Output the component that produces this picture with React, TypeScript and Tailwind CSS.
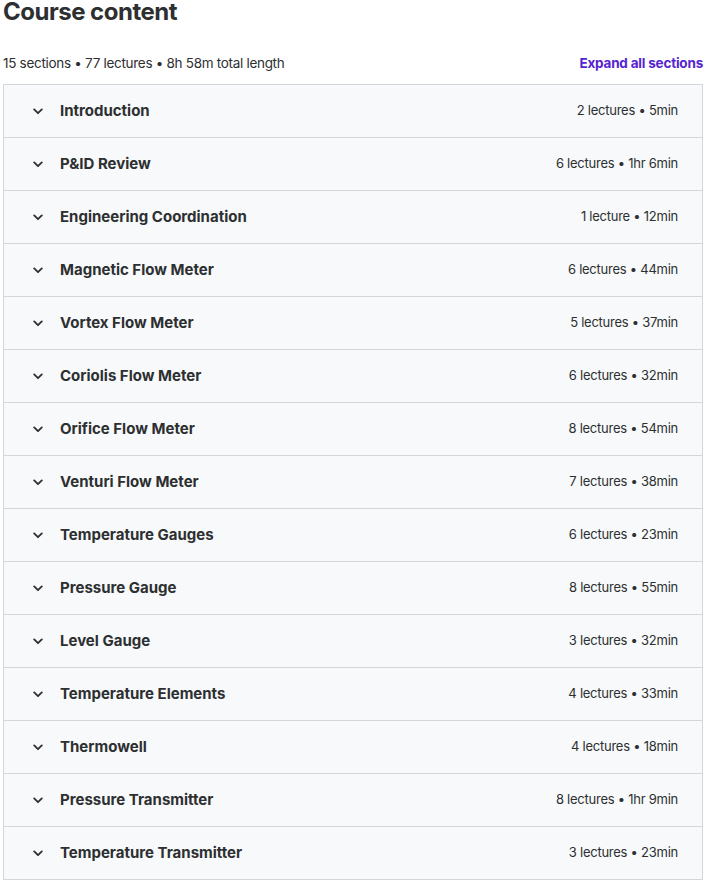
const SECTIONS = [
  { title: "Introduction", meta: "2 lectures • 5min" },
  { title: "P&ID Review", meta: "6 lectures • 1hr 6min" },
  { title: "Engineering Coordination", meta: "1 lecture • 12min" },
  { title: "Magnetic Flow Meter", meta: "6 lectures • 44min" },
  { title: "Vortex Flow Meter", meta: "5 lectures • 37min" },
  { title: "Coriolis Flow Meter", meta: "6 lectures • 32min" },
  { title: "Orifice Flow Meter", meta: "8 lectures • 54min" },
  { title: "Venturi Flow Meter", meta: "7 lectures • 38min" },
  { title: "Temperature Gauges", meta: "6 lectures • 23min" },
  { title: "Pressure Gauge", meta: "8 lectures • 55min" },
  { title: "Level Gauge", meta: "3 lectures • 32min" },
  { title: "Temperature Elements", meta: "4 lectures • 33min" },
  { title: "Thermowell", meta: "4 lectures • 18min" },
  { title: "Pressure Transmitter", meta: "8 lectures • 1hr 9min" },
  { title: "Temperature Transmitter", meta: "3 lectures • 23min" },
];

function Chevron() {
  return (
    <svg width="10" height="7" viewBox="0 0 10 7" fill="none" className="shrink-0 text-[#2d2f31]">
      <path d="M1.2 1.4L5 5.2L8.8 1.4" stroke="currentColor" strokeWidth="1.8" strokeLinecap="round" strokeLinejoin="round" />
    </svg>
  );
}

export default function App() {
  return (
    <div className="w-[705px] pl-[3px] pr-[2px] text-[#2d2f31] font-['Inter','Liberation_Sans',sans-serif] bg-white">
      {/* Heading */}
      <h2 className="text-[24px] font-bold leading-[24px] tracking-[-0.5px]">Course content</h2>

      {/* Summary row */}
      <div className="flex items-center justify-between mt-[25px] h-[28px]">
        <span className="text-[13.5px] tracking-[-0.3px] text-[#2d2f31]">15 sections • 77 lectures • 8h 58m total length</span>
        <button className="text-[13.5px] font-bold tracking-[-0.2px] text-[#5624d0]">Expand all sections</button>
      </div>

      {/* Sections */}
      <div className="mt-[7px] border border-[#d1d7dc] bg-[#f7f9fa]">
        {SECTIONS.map((s, i) => (
          <div
            key={s.title}
            className={`flex items-center pl-[29px] pr-[24px] ${i > 0 ? "h-[53px] border-t border-[#d1d7dc]" : "h-[52px]"}`}
          >
            <Chevron />
            <span className="ml-[17px] text-[15px] font-bold">{s.title}</span>
            <span className="ml-auto text-[13px] tracking-[-0.25px] text-[#2d2f31]">{s.meta}</span>
          </div>
        ))}
      </div>
    </div>
  );
}
